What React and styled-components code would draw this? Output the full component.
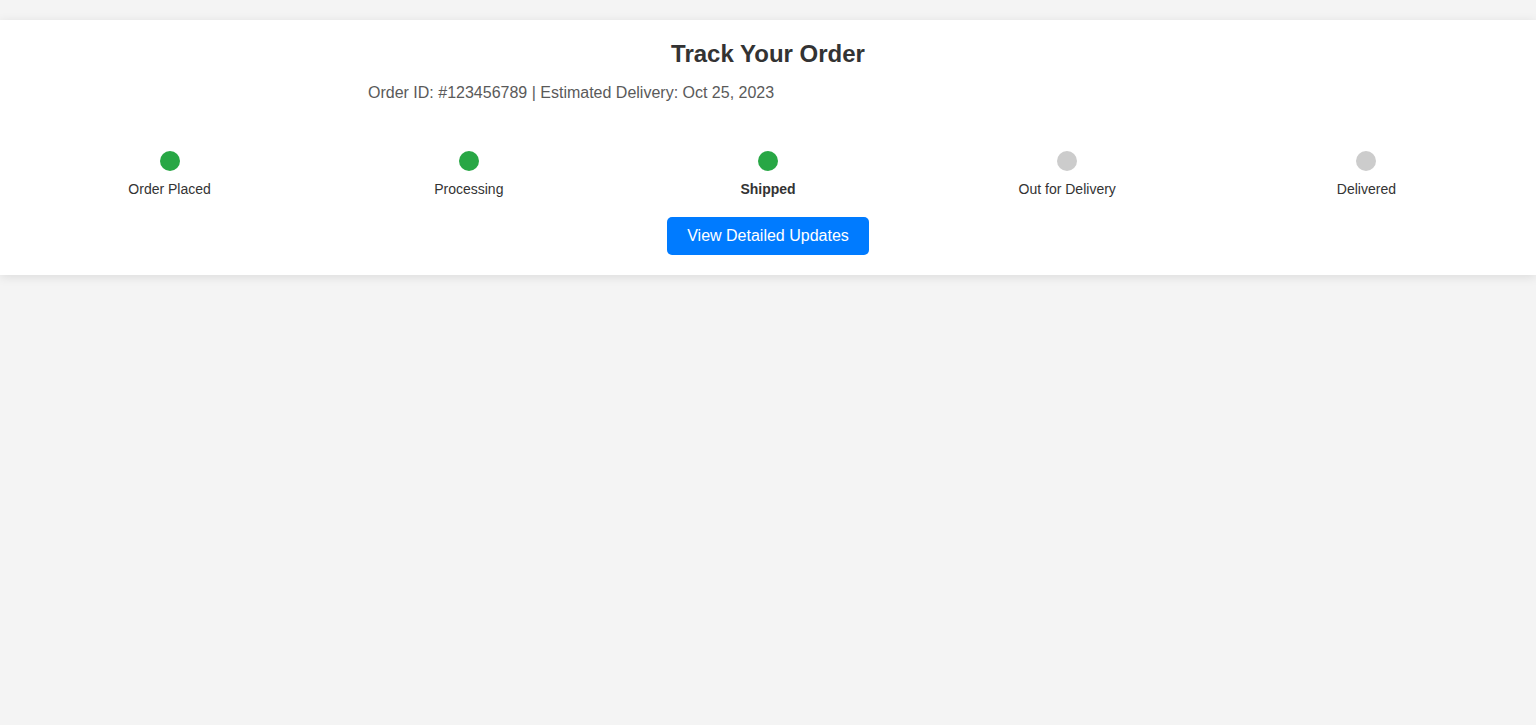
import React from "react";
import styled, { createGlobalStyle } from "styled-components";

const Global = createGlobalStyle`
  html, body {
    margin: 0;
    padding: 0;
    background: #f4f4f4;
    font-family: "Liberation Sans", Arial, sans-serif;
    color: #333;
  }
  body { min-height: 725px; }
`;

const Page = styled.div`
  padding-top: 20px;
`;

const Card = styled.section`
  background: #fff;
  padding: 20px;
  box-shadow: 0 2px 10px rgba(0, 0, 0, 0.1);
`;

const Title = styled.h1`
  margin: 0;
  font-size: 24px;
  font-weight: bold;
  text-align: center;
  color: #333;
`;

const Meta = styled.p`
  max-width: 800px;
  margin: 16px auto 0;
  font-size: 16px;
  color: #5a5a5a;
`;

const Steps = styled.div`
  display: flex;
  margin-top: 49px;
`;

const Step = styled.div`
  flex: 1;
  display: flex;
  flex-direction: column;
  align-items: center;
`;

const Dot = styled.span`
  width: 20px;
  height: 20px;
  border-radius: 50%;
  background: ${(p) => (p.$done ? "#28a745" : "#ccc")};
`;

const Label = styled.span`
  margin-top: 10px;
  font-size: 14px;
  line-height: 16px;
  color: #333;
  font-weight: ${(p) => (p.$current ? "bold" : "normal")};
`;

const Actions = styled.div`
  display: flex;
  justify-content: center;
  margin-top: 20px;
`;

const Button = styled.button`
  background: #007bff;
  color: #fff;
  border: none;
  border-radius: 5px;
  padding: 10px 20px;
  font-family: "Liberation Sans", Arial, sans-serif;
  font-size: 16px;
  line-height: 18px;
  cursor: pointer;
`;

const steps = [
  { label: "Order Placed", done: true },
  { label: "Processing", done: true },
  { label: "Shipped", done: true, current: true },
  { label: "Out for Delivery", done: false },
  { label: "Delivered", done: false },
];

export default function App() {
  return (
    <Page>
      <Global />
      <Card>
        <Title>Track Your Order</Title>
        <Meta>Order ID: #123456789 | Estimated Delivery: Oct 25, 2023</Meta>
        <Steps>
          {steps.map((s) => (
            <Step key={s.label}>
              <Dot $done={s.done} />
              <Label $current={s.current}>{s.label}</Label>
            </Step>
          ))}
        </Steps>
        <Actions>
          <Button>View Detailed Updates</Button>
        </Actions>
      </Card>
    </Page>
  );
}
